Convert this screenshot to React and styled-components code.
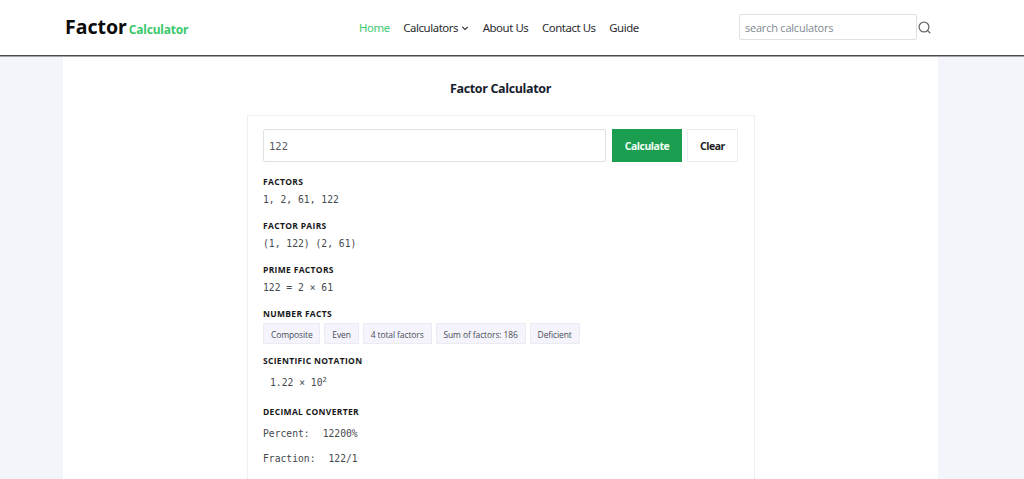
import styled, { createGlobalStyle } from 'styled-components'

const GlobalStyle = createGlobalStyle`
    * {
        box-sizing: border-box;
    }
    body {
        margin: 0;
        background: #f4f4fb;
        font-family: "Open Sans", "Noto Sans", sans-serif;
        color: #212529;
        overflow: hidden;
    }
`
const Page = styled.div`
    height: 479px;
    overflow: hidden;
    display: flex;
    flex-direction: column;
`
const Header = styled.header`
    height: 57px;
    flex-shrink: 0;
    background: white;
    border-bottom: 1px solid #a5a5a8;
    box-shadow: inset 0 -1px 0 #4b4b4e;
    display: flex;
    align-items: center;
    padding: 0 93px 2px 65px;
`
const Logo = styled.div`
    width: 294px;
    display: flex;
    align-items: baseline;
    gap: 2px;
    padding-top: 2px;
    font-family: "Noto Sans", sans-serif;
    line-height: 24px;
    white-space: nowrap;
`
const LogoMain = styled.span`
    font-size: 19.5px;
    font-weight: 700;
    color: #0b0b0b;
`
const LogoSub = styled.span`
    font-size: 12px;
    font-weight: 700;
    letter-spacing: -0.2px;
    color: #3cc96b;
`
const Nav = styled.nav`
    display: flex;
    gap: 13.5px;
    width: 380px;
    padding-top: 2px;
`
const NavLink = styled.a`
    display: flex;
    align-items: center;
    gap: 3px;
    font-family: "Noto Sans", sans-serif;
    font-size: 11.4px;
    line-height: 16px;
    letter-spacing: -0.42px;
    white-space: nowrap;
    color: ${(props) => (props.$active ? '#3fcb70' : '#2b2b2f')};
`
const Search = styled.div`
    display: flex;
    align-items: center;
    gap: 1px;
`
const SearchInput = styled.input`
    width: 178px;
    height: 26px;
    border: 1px solid #dfe1e4;
    border-radius: 2px;
    padding: 1px 5px 0;
    font-family: inherit;
    font-size: 11px;
    letter-spacing: -0.22px;
    outline: none;
    &::placeholder {
        color: #7f8993;
        opacity: 1;
    }
`
const Main = styled.main`
    flex: 1;
    min-height: 0;
    width: 875px;
    margin-left: 63px;
    background: white;
    display: flex;
    flex-direction: column;
`
const Title = styled.h1`
    margin: 23px 0 18px;
    font-size: 12.5px;
    font-weight: 700;
    line-height: 17px;
    letter-spacing: -0.35px;
    text-align: center;
    color: #17202c;
`
const Card = styled.section`
    flex: 1;
    width: 508px;
    margin-left: 184px;
    padding: 13px 16px 0 15px;
    border: 1px solid #eeeff1;
    border-bottom: none;
`
const Form = styled.div`
    display: flex;
    height: 33px;
    margin-bottom: 12px;
`
const NumberInput = styled.input`
    width: 343px;
    flex-shrink: 0;
    border: 1px solid #dfe1e3;
    border-radius: 2px;
    padding: 0 5px;
    margin-right: 6px;
    font-family: "DejaVu Sans Mono", monospace;
    font-size: 10.5px;
    color: #54585d;
    outline: none;
`
const Button = styled.button`
    width: ${(props) => (props.$primary ? '70px' : '51px')};
    flex-shrink: 0;
    margin-right: ${(props) => (props.$primary ? '5px' : '0')};
    padding: 1px 0 0;
    border: 1px solid ${(props) => (props.$primary ? '#1b9e50' : '#ebecee')};
    background: ${(props) => (props.$primary ? '#1b9e50' : 'white')};
    color: ${(props) => (props.$primary ? '#f2fff7' : '#1c1c1f')};
    font-family: inherit;
    font-size: 10.5px;
    font-weight: 700;
    letter-spacing: -0.48px;
`
const Group = styled.div`
    margin-bottom: ${(props) => props.$space || '10px'};
`
const Label = styled.h2`
    margin: 0;
    font-size: 8.5px;
    font-weight: 700;
    line-height: 15px;
    letter-spacing: 0.32px;
    color: #17181a;
`
const Value = styled.div`
    height: ${(props) => props.$height || '19px'};
    display: flex;
    align-items: center;
    gap: 13px;
    padding-top: 1px;
    padding-left: ${(props) => props.$indent || '0'};
    font-family: "DejaVu Sans Mono", monospace;
    font-size: 9.7px;
    line-height: 17px;
    white-space: pre;
    color: #45494e;
`
const Exponent = styled.sup`
    font-size: 7px;
    line-height: 0;
    vertical-align: 4px;
`
const Badges = styled.div`
    display: flex;
    gap: 4px;
    margin-top: 2px;
`
const Badge = styled.span`
    height: 21px;
    padding: 0 6.9px;
    border: 1px solid #ebebf3;
    background: #f5f4fc;
    font-size: 8.5px;
    line-height: 21px;
    letter-spacing: -0.11px;
    white-space: nowrap;
    color: #4a4c57;
`

const ChevronIcon = () => (
  <svg width="8" height="8" viewBox="0 0 8 8" fill="none" stroke="#2b2b2f" strokeWidth="1.1">
    <path d="M1.2 2.8 4 5.4 6.8 2.8" />
  </svg>
)

const SearchIcon = () => (
  <svg width="13" height="13" viewBox="0 0 13 13" fill="none" stroke="#6a6c70" strokeWidth="1.3">
    <circle cx="6" cy="6" r="4.9" />
    <path d="M9.5 9.5 12.3 12.2" />
  </svg>
)

const facts = ['Composite', 'Even', '4 total factors', 'Sum of factors: 186', 'Deficient']

const App = () => {
  return (
    <Page>
        <GlobalStyle/>
        <Header>
            <Logo>
                <LogoMain>Factor</LogoMain>
                <LogoSub>Calculator</LogoSub>
            </Logo>
            <Nav>
                <NavLink $active>Home</NavLink>
                <NavLink>Calculators <ChevronIcon/></NavLink>
                <NavLink>About Us</NavLink>
                <NavLink>Contact Us</NavLink>
                <NavLink>Guide</NavLink>
            </Nav>
            <Search>
                <SearchInput placeholder='search calculators'/>
                <SearchIcon/>
            </Search>
        </Header>
        <Main>
            <Title>Factor Calculator</Title>
            <Card>
                <Form>
                    <NumberInput defaultValue='122'/>
                    <Button $primary>Calculate</Button>
                    <Button>Clear</Button>
                </Form>
                <Group>
                    <Label>FACTORS</Label>
                    <Value>1, 2, 61, 122</Value>
                </Group>
                <Group>
                    <Label>FACTOR PAIRS</Label>
                    <Value>(1, 122) (2, 61)</Value>
                </Group>
                <Group>
                    <Label>PRIME FACTORS</Label>
                    <Value>122 = 2 × 61</Value>
                </Group>
                <Group $space='9px'>
                    <Label>NUMBER FACTS</Label>
                    <Badges>
                        {facts.map((fact) => <Badge key={fact}>{fact}</Badge>)}
                    </Badges>
                </Group>
                <Group $space='8px'>
                    <Label>SCIENTIFIC NOTATION</Label>
                    <Value $height='28px' $indent='7px'>
                        <span>1.22 × 10<Exponent>2</Exponent></span>
                    </Value>
                </Group>
                <Group>
                    <Label>DECIMAL CONVERTER</Label>
                    <Value $height='28px'><span>Percent:</span><span>12200%</span></Value>
                    <Value $height='22px'><span>Fraction:</span><span>122/1</span></Value>
                </Group>
            </Card>
        </Main>
    </Page>
  )
}

export default App
